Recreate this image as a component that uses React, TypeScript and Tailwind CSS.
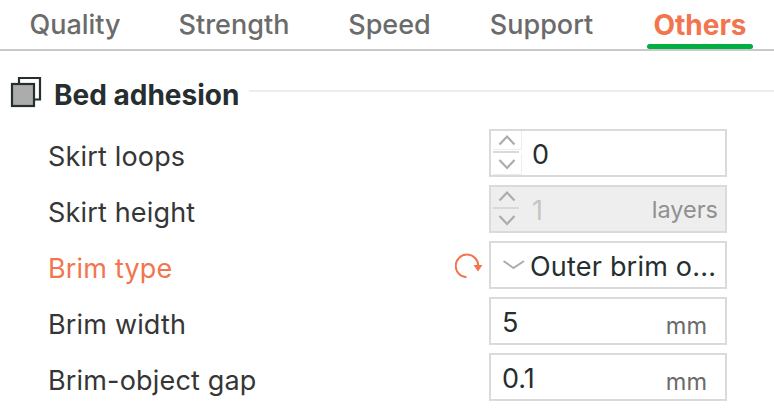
import React, { useState } from 'react';

interface Tab {
  name: string;
  className: string;
}

const tabs: Tab[] = [
  { name: 'Quality', className: 'w-[106px]' },
  { name: 'Strength', className: 'w-[128px]' },
  { name: 'Speed', className: 'w-[99px]' },
  { name: 'Support', className: 'w-[121px]' },
  { name: 'Others', className: 'ml-[3px] w-[106px]' },
];

const TabBar: React.FC = () => {
  const [active, setActive] = useState('Others');

  return (
    <nav className="flex h-[51px] gap-[42px] border-b-2 border-[#c9c9c9] pl-[22px]">
      {tabs.map(tab => (
        <button
          key={tab.name}
          onClick={() => setActive(tab.name)}
          className={`flex h-[49px] shrink-0 flex-col items-center justify-between whitespace-nowrap leading-[50px] ${tab.className} ${
            active === tab.name ? 'text-[28px] font-bold text-[#f2754e]' : 'text-[27px] font-medium text-[#6b6b6b]'
          }`}
        >
          <span className="h-[43px]">{tab.name}</span>
          {active === tab.name && <span className="h-[5px] w-full rounded-full bg-[#00ae42]" />}
        </button>
      ))}
    </nav>
  );
};

const AdhesionIcon: React.FC = () => (
  <svg width="32" height="32" viewBox="0 0 32 32" fill="none" stroke="#262e30" strokeWidth="2.2" className="shrink-0">
    <path d="M9 7V2H30V23.5H24" />
    <rect x="2" y="8" width="22" height="22" fill="#acacac" />
  </svg>
);

const ResetIcon: React.FC = () => (
  <svg width="28" height="26" viewBox="0 0 28 26" fill="none" className="shrink-0">
    <path d="M11.5 24.2A11.3 11.3 0 1 1 23.3 13" stroke="#f2754e" strokeWidth="2" />
    <path d="M18.5 12H27.5L23 18.5Z" fill="#f2754e" />
  </svg>
);

const Spinner: React.FC<{ disabled?: boolean }> = ({ disabled }) => (
  <svg width="31" height="44" viewBox="0 0 31 44" fill="none" strokeWidth="2" className="shrink-0">
    {!disabled && <path d="M2 18.5H30.5V0M2 43.5H30.5V23" stroke="#ededed" strokeWidth="1" />}
    <path d="M8.5 13.5L16 5.5L23.5 13.5M8.5 29L16 37L23.5 29" stroke="#acacac" strokeWidth="2.2" />
    <path d="M2 21H28" stroke="#d9d9d9" />
  </svg>
);

interface RowProps {
  label: string;
  modified?: boolean;
  disabled?: boolean;
  children: React.ReactNode;
}

const Row: React.FC<RowProps> = ({ label, modified, disabled, children }) => (
  <div className="flex h-12 items-center">
    <span className={`w-[407px] pt-2 text-[27px] leading-[42px] tracking-[0.17px] ${modified ? 'text-[#f2754e]' : 'text-[#363636]'}`}>
      {label}
    </span>
    <div className="flex w-[34px] pt-0.5">{modified && <ResetIcon />}</div>
    <div
      className={`flex h-12 w-[238px] items-center whitespace-nowrap border-2 border-[#dadada] text-[27px] leading-[42px] ${
        disabled ? 'bg-[#eeeeee] text-[#c4c4c4]' : 'bg-white text-[#262e30]'
      }`}
    >
      {children}
    </div>
  </div>
);

const Millimetres: React.FC = () => (
  <span className="ml-auto pr-[18px] pt-2.5 text-[23.5px] leading-[36px] text-[#6b6b6b]">mm</span>
);

const App: React.FC = () => {
  return (
    <div className="h-[410px] w-[774px] overflow-hidden bg-white font-['Inter',sans-serif]">
      <TabBar />

      <div className="flex h-[78px] items-center pl-2.5 pt-1">
        <AdhesionIcon />
        <h2 className="w-[195px] whitespace-nowrap pl-3 pt-1.5 text-[28px] font-bold leading-[36px] text-[#262e30]">Bed adhesion</h2>
        <div className="mb-0.5 ml-3 h-0.5 flex-1 bg-[#ededed]" />
      </div>

      <div className="flex flex-col gap-2 pl-12">
        <Row label="Skirt loops">
          <Spinner />
          <span className="pl-2.5 pt-1">0</span>
        </Row>
        <Row label="Skirt height" disabled>
          <Spinner disabled />
          <span className="pl-2.5 pt-1">1</span>
          <span className="ml-auto pr-[7px] pt-0.5 text-[23.5px] leading-[36px] text-[#909090]">layers</span>
        </Row>
        <Row label="Brim type" modified>
          <svg width="27" height="12" viewBox="0 0 27 12" fill="none" className="ml-3 shrink-0">
            <path d="M0.5 2L10.5 9L21 2" stroke="#acacac" strokeWidth="2" />
          </svg>
          <span className="pt-1 tracking-[0.2px]">Outer brim o...</span>
        </Row>
        <Row label="Brim width">
          <span className="pl-[11px] pt-1">5</span>
          <Millimetres />
        </Row>
        <Row label="Brim-object gap">
          <span className="pl-[11px] pt-1">0.1</span>
          <Millimetres />
        </Row>
      </div>
    </div>
  );
};

export default App;
